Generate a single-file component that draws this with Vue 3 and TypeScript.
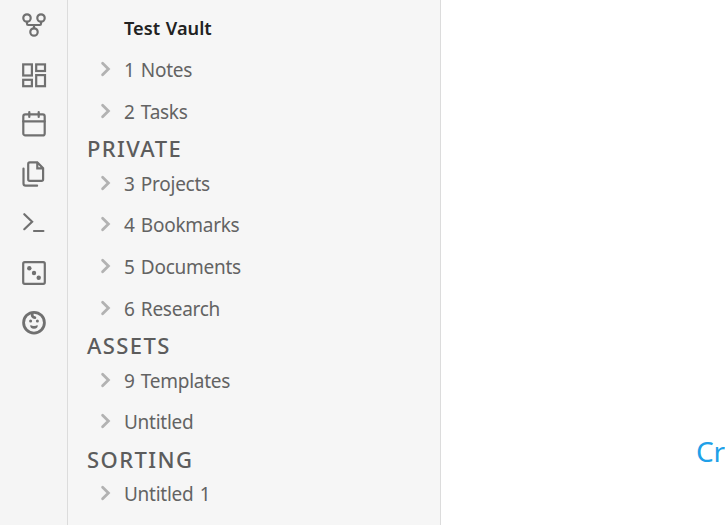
<script setup lang="ts">
interface Entry {
  label: string
  kind: 'vault' | 'folder' | 'section'
}

const entries: Entry[] = [
  { label: 'Test Vault', kind: 'vault' },
  { label: '1 Notes', kind: 'folder' },
  { label: '2 Tasks', kind: 'folder' },
  { label: 'PRIVATE', kind: 'section' },
  { label: '3 Projects', kind: 'folder' },
  { label: '4 Bookmarks', kind: 'folder' },
  { label: '5 Documents', kind: 'folder' },
  { label: '6 Research', kind: 'folder' },
  { label: 'ASSETS', kind: 'section' },
  { label: '9 Templates', kind: 'folder' },
  { label: 'Untitled', kind: 'folder' },
  { label: 'SORTING', kind: 'section' },
  { label: 'Untitled 1', kind: 'folder' },
]
</script>

<template>
  <div class="app">
    <nav class="ribbon">
      <svg class="icon" viewBox="0 0 28 28">
        <circle cx="7" cy="7" r="3.7" />
        <circle cx="21" cy="7" r="3.7" />
        <circle cx="14" cy="21" r="3.7" />
        <path d="M7 10.8v2q0 1.2 1.2 1.2h11.6q1.2 0 1.2-1.2v-2M14 14v3.2" />
      </svg>
      <svg class="icon" viewBox="0 0 28 28">
        <rect x="3.2" y="3.4" width="8.7" height="11.1" />
        <rect x="16.2" y="3.4" width="8.8" height="6.6" />
        <rect x="3.2" y="18.8" width="8.7" height="6.4" />
        <rect x="16.2" y="14.1" width="8.8" height="11.1" />
      </svg>
      <svg class="icon" viewBox="0 0 28 28">
        <rect x="3.3" y="4.4" width="21.4" height="21" rx="2" />
        <path d="M3.2 11.4h21.4M9.3 2.1v4.8M18.7 2.1v4.8" />
      </svg>
      <svg class="icon" viewBox="0 0 28 28">
        <path d="M17.3 2.3H9.8q-1.6 0-1.6 1.6v15.3q0 1.6 1.6 1.6h11.7q1.6 0 1.6-1.6V8.3zM17.3 2.3v6h5.8" />
        <path d="M3.5 8.5v15q0 2.2 2.2 2.2h11.4" />
      </svg>
      <svg class="icon" viewBox="0 0 28 28">
        <path d="M4.3 5.2l7.8 7.6l-7.8 7.4M14 22h9.4" />
      </svg>
      <svg class="icon" viewBox="0 0 28 28">
        <rect x="3.2" y="3.2" width="21.6" height="21.6" rx="1.5" />
        <g class="solid">
          <circle cx="9.3" cy="9.3" r="2.2" />
          <circle cx="14" cy="14" r="2.2" />
          <circle cx="18.7" cy="18.7" r="2.2" />
        </g>
      </svg>
      <svg class="icon" viewBox="0 0 28 28">
        <circle class="heavy" cx="14" cy="13.7" r="10.4" />
        <path class="heavy" d="M12.2 4.8q-.4 3.6 2.7 3.8" />
        <g class="solid">
          <circle cx="10.6" cy="11.9" r="1.5" />
          <circle cx="17.4" cy="11.9" r="1.5" />
          <path d="M10.4 16q3.6 1.9 7.2 0q.6 3.8-3.6 3.8t-3.6-3.8z" />
        </g>
      </svg>
    </nav>

    <aside class="explorer">
      <div v-for="entry in entries" :key="entry.label" :class="['row', entry.kind]">
        <svg v-if="entry.kind === 'folder'" class="chevron" viewBox="0 0 12 18">
          <path d="M2.6 3.3l5.8 5.7l-5.8 5.7" />
        </svg>
        <span>{{ entry.label }}</span>
      </div>
    </aside>

    <main class="workspace">
      <a class="create">Cr</a>
    </main>
  </div>
</template>

<style>
body {
  background: #fff;
  overflow: hidden;
}
</style>

<style scoped>
.app {
  display: flex;
  width: 725px;
  height: 525px;
  overflow: hidden;
  background: #fff;
  font-family: "Noto Sans", "Open Sans", sans-serif;
}

.ribbon,
.explorer {
  box-sizing: border-box;
  flex: none;
  border-right: 1px solid #dcdcdc;
  background: #f6f6f6;
}

.ribbon {
  display: flex;
  flex-direction: column;
  gap: 21.6px;
  width: 68px;
  padding: 11px 0 0 20px;
  background: #f5f5f5;
}

.icon {
  flex: none;
  width: 28px;
  height: 28px;
  fill: none;
  stroke: #707070;
  stroke-width: 2.2;
  stroke-linecap: round;
}

.solid {
  fill: #707070;
  stroke: none;
}

.heavy {
  stroke-width: 2.8;
}

.explorer {
  width: 373px;
  padding-top: 7px;
}

.row {
  display: flex;
  align-items: center;
  height: 41.6px;
  padding-left: 56px;
  color: #5c5c5c;
  font-size: 19px;
  line-height: 26px;
  white-space: nowrap;
}

.folder {
  padding-left: 32px;
  color: #636363;
  letter-spacing: -0.27px;
  word-spacing: 1.6px;
}

.vault {
  margin-bottom: 0.8px;
  color: #222;
  font-weight: 600;
  font-size: 18.2px;
  word-spacing: 1px;
}

.section {
  height: 30.4px;
  padding: 1px 0 0 19px;
  box-sizing: border-box;
  font-size: 22px;
  font-weight: 500;
  letter-spacing: 1.4px;
}

.chevron {
  flex: none;
  width: 12px;
  height: 18px;
  margin: -2px 12px 0 0;
  fill: none;
  stroke: #b2b2b2;
  stroke-width: 2.8;
  stroke-linecap: round;
}

.workspace {
  flex: 1;
  min-width: 0;
  overflow: hidden;
  padding: 431px 0 0 255px;
}

.create {
  display: block;
  color: #20a0e8;
  font-size: 28px;
  line-height: 40px;
  letter-spacing: -0.2px;
  white-space: nowrap;
}
</style>
